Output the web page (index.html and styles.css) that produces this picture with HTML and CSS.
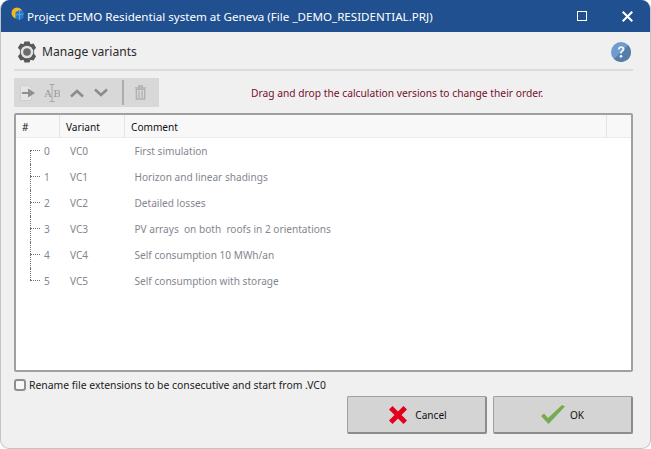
FILE: index.html
```html
<!DOCTYPE html>
<html>
<head>
<title>Manage variants</title>
<link rel="stylesheet" href="styles.css">
</head>
<body>
<div class="window">
  <div class="titlebar">
    <svg class="app-icon" width="13" height="13" viewBox="0 0 13 13">
      <circle cx="6" cy="6" r="5.500" fill="#f5b81c"/>
      <path d="M4.500 5l4-2 4 1.500V11l-4 2-4-1.500z" fill="#2a78c8"/>
      <path d="M4.500 8l8-1M8.500 3v10" stroke="#5aa3e6" stroke-width="1"/>
    </svg>
    <span class="title">Project DEMO Residential system at Geneva (File _DEMO_RESIDENTIAL.PRJ)</span>
    <svg class="win-btn max" width="10" height="10" viewBox="0 0 10 10">
      <rect x="0.500" y="0.500" width="9" height="9" fill="none" stroke="#fff"/>
    </svg>
    <svg class="win-btn close" width="11" height="11" viewBox="0 0 11 11">
      <path d="M.7.700l9.600 9.600M10.300.700L.7 10.300" stroke="#fff" stroke-width="2"/>
    </svg>
  </div>

  <div class="content">
    <div class="head">
      <svg width="22" height="22" viewBox="0 0 22 22">
        <path d="M8.500 0.500h5l1 2.800 3-.8 2.600 4.300-2 2.300v3.800l2 2.300-2.600 4.300-3-.8-1 2.800h-5l-1-2.800-3 .8-2.600-4.300 2-2.300V9.100l-2-2.300L4.500 2.500l3 .8z" fill="#595959"/>
        <circle cx="11" cy="11" r="6.300" fill="#e2e2e2"/>
        <circle cx="11" cy="11" r="3.800" fill="#6c6c6c"/>
      </svg>
      <span class="head-title">Manage variants</span>
      <svg class="help" width="20" height="20" viewBox="0 0 20 20">
        <circle cx="10" cy="10" r="10" fill="#6f9bce"/>
        <path d="M20 10a10 10 0 0 1-17 7L17 3a10 10 0 0 1 3 7z" fill="#557da8"/>
        <path d="M6.800 7.500C7 5.200 8.500 4.200 10.200 4.200c2 0 3.300 1.200 3.300 2.800 0 2.400-2.600 2.500-2.600 4.600H9c0-3 2.400-3 2.400-4.500 0-.7-.5-1.200-1.300-1.200-.8 0-1.300.6-1.400 1.600z" fill="#eef3f9"/>
        <circle cx="10" cy="14.300" r="1.400" fill="#eef3f9"/>
      </svg>
    </div>

    <div class="tools-row">
      <div class="toolbar">
        <svg class="tool tool-first" width="16" height="16" viewBox="0 0 16 16">
          <path d="M0.500 0.500h8l3 3v12h-11z" fill="#e4e4e4" stroke="#cfcfcf"/>
          <path d="M2 7h6V3.500l7 4.500-7 4.500V9H2z" fill="#8f8f8f"/>
        </svg>
        <svg class="tool" width="16" height="18" viewBox="0 0 16 18">
          <path d="M5.500 .5h5M5.500 17.500h5M8 .5v17" stroke="#a8a8a8" fill="none"/>
          <text x="0" y="13" class="ab">A</text>
          <text x="9.500" y="13" class="ab">B</text>
        </svg>
        <svg class="tool" width="14" height="10" viewBox="0 0 14 10">
          <path d="M1 8.500l6-5.500 6 5.500" fill="none" stroke="#8c8c8c" stroke-width="2.600"/>
        </svg>
        <svg class="tool" width="14" height="10" viewBox="0 0 14 10">
          <path d="M1 1.500l6 5.500 6-5.500" fill="none" stroke="#8c8c8c" stroke-width="2.600"/>
        </svg>
        <span class="tool-sep"></span>
        <svg class="tool" width="13" height="15" viewBox="0 0 14 16">
          <path d="M1 3h12M5 3V1h4v2" fill="none" stroke="#b0b0b0" stroke-width="1.400"/>
          <path d="M2.500 4.500h9V15h-9z" fill="none" stroke="#b0b0b0" stroke-width="1.400"/>
          <path d="M5.300 6v8M8.700 6v8" stroke="#b0b0b0" stroke-width="1.400"/>
        </svg>
      </div>
      <p class="hint">Drag and drop the calculation versions to change their order.</p>
    </div>

    <div class="list">
      <div class="list-head">
        <span class="col-num">#</span>
        <span class="col-var">Variant</span>
        <span class="col-com">Comment</span>
        <span class="col-end"></span>
      </div>
      <div class="row first"><span class="cell-num">0</span><span class="cell-var">VC0</span><span>First simulation</span></div>
      <div class="row"><span class="cell-num">1</span><span class="cell-var">VC1</span><span>Horizon and linear shadings</span></div>
      <div class="row"><span class="cell-num">2</span><span class="cell-var">VC2</span><span>Detailed losses</span></div>
      <div class="row"><span class="cell-num">3</span><span class="cell-var">VC3</span><span>PV arrays  on both  roofs in 2 orientations</span></div>
      <div class="row"><span class="cell-num">4</span><span class="cell-var">VC4</span><span>Self consumption 10 MWh/an</span></div>
      <div class="row last"><span class="cell-num">5</span><span class="cell-var">VC5</span><span>Self consumption with storage</span></div>
    </div>

    <label class="check">
      <span class="box"></span>
      Rename file extensions to be consecutive and start from .VC0
    </label>

    <div class="buttons">
      <button class="btn cancel">
        <svg width="18" height="18" viewBox="0 0 18 18">
          <path d="M3.500 0L9 5.500 14.500 0 18 3.500 12.500 9l5.500 5.500-3.500 3.500L9 12.500 3.500 18 0 14.500 5.500 9 0 3.500z" fill="#e2001a"/>
        </svg>
        Cancel
      </button>
      <button class="btn ok">
        <svg width="24" height="19" viewBox="0 0 24 19">
          <path d="M0 11l3-2.500 4 4.500L21 0l3 1.500L7.500 19z" fill="#76ab52"/>
        </svg>
        OK
      </button>
    </div>
  </div>
</div>
</body>
</html>
```

FILE: styles.css
```css
html, body {
  margin: 0;
  padding: 0;
  background: #fff;
}
body {
  font-family: "Noto Sans", sans-serif;
  font-size: 10.100px;
  color: #222;
}
.window {
  width: 651px;
  height: 449px;
  box-sizing: border-box;
  display: flex;
  flex-direction: column;
  background: #f0f0f0;
  border: 1px solid #c4c4c4;
  border-top: 0;
  border-radius: 9px;
  overflow: hidden;
}
.titlebar {
  height: 32px;
  flex: none;
  display: flex;
  align-items: center;
  background: #20508f;
  color: #fff;
  padding: 0 18px 0 11px;
  margin: 0 -1px;
}
.app-icon {
  margin: -5px 3px 0 0;
}
.title {
  flex: 1;
  font-size: 11.600px;
}
.win-btn.max {
  margin-right: 35px;
}
.content {
  flex: 1;
  display: flex;
  flex-direction: column;
  padding: 0 17px 0 13px;
}
.head {
  height: 39px;
  display: flex;
  align-items: center;
  gap: 4px;
  padding: 2px 1px 0 2px;
  box-sizing: border-box;
  border-bottom: 2px solid #dcdcdc;
}
.head-title {
  flex: 1;
  font-size: 12.100px;
  color: #2b2b2b;
}
.help {
  margin-right: 1px;
}
.tools-row {
  display: flex;
  align-items: center;
  margin-top: 7px;
}
.toolbar {
  width: 145px;
  height: 29px;
  box-sizing: border-box;
  display: flex;
  align-items: center;
  gap: 10px;
  padding-left: 6px;
  background: #d8d8d8;
}
.tool {
  flex: none;
}
.tool-first {
  margin-right: -2px;
}
.ab {
  font-family: "Liberation Serif", serif;
  font-size: 11px;
  fill: #9a9a9a;
}
.tool-sep {
  width: 2px;
  height: 25px;
  margin-left: 4px;
  background: #adadad;
}
.hint {
  margin: 0 0 0 92px;
  font-size: 10.250px;
  color: #7a0e2c;
}
.list {
  height: 259px;
  box-sizing: border-box;
  margin-top: 6px;
  background: #fff;
  border: 2px solid #a0a0a0;
  border-radius: 2px;
}
.list-head {
  height: 22px;
  display: flex;
  align-items: center;
  background: #f8f8f8;
  border-bottom: 1px solid #ececec;
  color: #111;
}
.list-head span {
  height: 100%;
  box-sizing: border-box;
  line-height: 25px;
  border-right: 1px solid #e4e4e4;
  padding-left: 6px;
}
.col-num {
  width: 44px;
}
.col-var {
  width: 65px;
}
.col-com {
  width: 482px;
}
.col-end {
  flex: 1;
  border-right: 0 !important;
}
.row {
  position: relative;
  height: 26px;
  display: flex;
  align-items: center;
  color: #85858f;
  padding-left: 28px;
}
.row::before {
  content: "";
  position: absolute;
  left: 14px;
  top: 12px;
  width: 10px;
  border-top: 1px dotted #707070;
}
.row::after {
  content: "";
  position: absolute;
  left: 14px;
  top: 0;
  height: 26px;
  border-left: 1px dotted #707070;
}
.row.first::after {
  top: 12px;
  height: 14px;
}
.row.last::after {
  height: 12px;
}
.cell-num {
  width: 26px;
}
.cell-var {
  width: 64.500px;
}
.row span {
  white-space: pre;
}
.check {
  display: flex;
  align-items: center;
  gap: 3px;
  margin-top: 6px;
  height: 13px;
  font-size: 10.380px;
  color: #222;
}
.box {
  width: 8px;
  height: 8px;
  background: #f8f8f8;
  border: 2px solid #8f8f8f;
  border-radius: 3px;
}
.buttons {
  display: flex;
  justify-content: flex-end;
  gap: 6px;
  margin-top: 5px;
}
.btn {
  width: 140px;
  height: 38px;
  display: flex;
  align-items: center;
  justify-content: center;
  padding: 0;
  font: 10.100px "Noto Sans", sans-serif;
  color: #111;
  background: #d4d4d4;
  border: 1px solid #a0a0a0;
  border-bottom: 2px solid #8c8c8c;
  border-right: 2px solid #8c8c8c;
  border-radius: 2px;
}
.cancel {
  gap: 8px;
  padding-left: 3px;
}
.ok {
  gap: 5px;
}
```
